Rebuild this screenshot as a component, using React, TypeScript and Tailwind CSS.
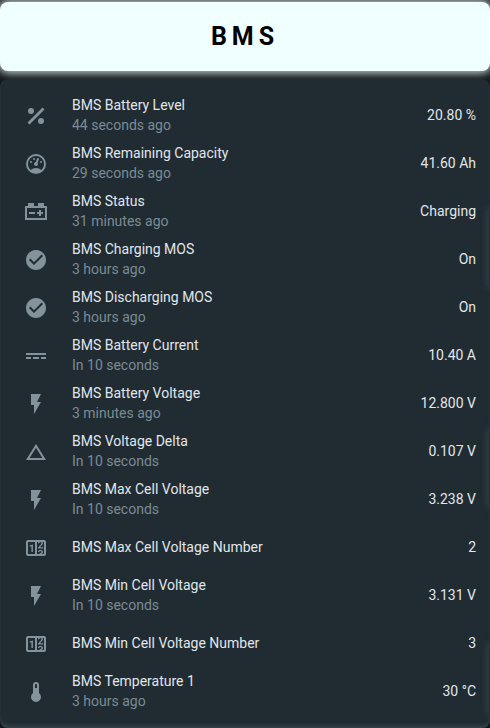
type Icon = keyof typeof icons;

const icons = {
  percent:
    'M18.5 3.5L3.5 18.5L5.5 20.5L20.5 5.5M7 4A3 3 0 0 0 4 7A3 3 0 0 0 7 10A3 3 0 0 0 10 7A3 3 0 0 0 7 4M17 14A3 3 0 0 0 14 17A3 3 0 0 0 17 20A3 3 0 0 0 20 17A3 3 0 0 0 17 14Z',
  gauge:
    'M12 2A10 10 0 0 0 2 12A10 10 0 0 0 12 22A10 10 0 0 0 22 12A10 10 0 0 0 12 2M12 4A8 8 0 0 1 20 12C20 14.4 19 16.5 17.3 18C15.9 16.7 14 16 12 16C10 16 8.2 16.7 6.7 18C5 16.5 4 14.4 4 12A8 8 0 0 1 12 4M14 5.89C13.62 5.9 13.26 6.15 13.1 6.54L11.81 9.77L11.71 10C11 10.13 10.41 10.6 10.14 11.26C9.73 12.29 10.23 13.45 11.26 13.86C12.29 14.27 13.45 13.77 13.86 12.74C14.12 12.08 14 11.32 13.57 10.76L13.67 10.5L14.96 7.29L14.97 7.26C15.17 6.75 14.92 6.17 14.41 5.96C14.28 5.91 14.15 5.89 14 5.89M10 6A1 1 0 0 0 9 7A1 1 0 0 0 10 8A1 1 0 0 0 11 7A1 1 0 0 0 10 6M7 9A1 1 0 0 0 6 10A1 1 0 0 0 7 11A1 1 0 0 0 8 10A1 1 0 0 0 7 9M17 9A1 1 0 0 0 16 10A1 1 0 0 0 17 11A1 1 0 0 0 18 10A1 1 0 0 0 17 9Z',
  battery:
    'M4 3V6H1V20H23V6H20V3H14V6H10V3H4M3 8H21V18H3V8M15 10V12H13V14H15V16H17V14H19V12H17V10H15M5 12V14H11V12H5Z',
  check:
    'M12 2C6.5 2 2 6.5 2 12S6.5 22 12 22 22 17.5 22 12 17.5 2 12 2M10 17L5 12L6.41 10.59L10 14.17L17.59 6.58L19 8L10 17Z',
  current: 'M2 9V11H22V9H2M2 13V15H7V13H2M9 13V15H15V13H9M17 13V15H22V13H17Z',
  flash: 'M7 2V13H10V22L17 10H13L17 2H7Z',
  delta: 'M12 7.77L18.39 18H5.61L12 7.77M12 4L2 20H22',
  counter:
    'M4 4H20A2 2 0 0 1 22 6V18A2 2 0 0 1 20 20H4A2 2 0 0 1 2 18V6A2 2 0 0 1 4 4M4 6V18H11V6H4M20 18V6H18.76C19 6.54 18.95 7.07 18.95 7.13C18.88 7.8 18.41 8.5 18.24 8.75L15.91 11.3L19.23 11.28L19.24 12.5L14.04 12.47L14 11.47C14 11.47 17.05 8.24 17.2 7.95C17.34 7.67 17.91 6 16.5 6C15.27 6.05 15.41 7.3 15.41 7.3L13.87 7.31C13.87 7.31 13.88 6.65 14.25 6H13V18H15.58L15.57 17.14L16.54 17.13C16.54 17.13 17.45 16.97 17.46 16.08C17.5 15.08 16.65 15.08 16.5 15.08C16.37 15.08 15.43 15.13 15.43 15.95H13.91C13.91 15.95 13.95 13.89 16.5 13.89C19.1 13.89 18.96 15.91 18.96 15.91C18.96 15.91 19 17.16 17.85 17.63L18.37 18H20M8.92 16H7.42V10.2L5.62 10.76V9.53L8.76 8.41H8.92V16Z',
  thermometer:
    'M15 13V5A3 3 0 0 0 9 5V13A5 5 0 1 0 15 13M12 4A1 1 0 0 1 13 5V8H11V5A1 1 0 0 1 12 4Z',
};

const rows: { icon: Icon; name: string; ago?: string; value: string }[] = [
  { icon: 'percent', name: 'BMS Battery Level', ago: '44 seconds ago', value: '20.80 %' },
  { icon: 'gauge', name: 'BMS Remaining Capacity', ago: '29 seconds ago', value: '41.60 Ah' },
  { icon: 'battery', name: 'BMS Status', ago: '31 minutes ago', value: 'Charging' },
  { icon: 'check', name: 'BMS Charging MOS', ago: '3 hours ago', value: 'On' },
  { icon: 'check', name: 'BMS Discharging MOS', ago: '3 hours ago', value: 'On' },
  { icon: 'current', name: 'BMS Battery Current', ago: 'In 10 seconds', value: '10.40 A' },
  { icon: 'flash', name: 'BMS Battery Voltage', ago: '3 minutes ago', value: '12.800 V' },
  { icon: 'delta', name: 'BMS Voltage Delta', ago: 'In 10 seconds', value: '0.107 V' },
  { icon: 'flash', name: 'BMS Max Cell Voltage', ago: 'In 10 seconds', value: '3.238 V' },
  { icon: 'counter', name: 'BMS Max Cell Voltage Number', value: '2' },
  { icon: 'flash', name: 'BMS Min Cell Voltage', ago: 'In 10 seconds', value: '3.131 V' },
  { icon: 'counter', name: 'BMS Min Cell Voltage Number', value: '3' },
  { icon: 'thermometer', name: 'BMS Temperature 1', ago: '3 hours ago', value: '30 °C' },
];

export default function App() {
  return (
    <main className="flex flex-col gap-2 bg-[#11181d] pt-[2px] font-[Roboto,sans-serif] text-sm leading-5">
      <header className="flex h-[69px] items-center justify-center rounded-lg bg-[#f0ffff] shadow-[0_0_10px_2px_#d3dddd]">
        <h1 className="text-[25px] font-bold tracking-[5px] text-black">BMS</h1>
      </header>
      <section className="relative overflow-hidden rounded-lg bg-[#202b32] pt-[17px] pr-[14px] pb-4 pl-4 shadow-[inset_0_-4px_4px_-2px_#3a474e]">
        <ul className="flex flex-col gap-2">
          {rows.map((row) => (
            <li key={row.name} className="flex h-10 items-center">
              <span className="flex size-10 shrink-0 items-center justify-center text-[#84939b]">
                <svg viewBox="0 0 24 24" className="size-6 fill-current" aria-hidden="true">
                  <path d={icons[row.icon]} />
                </svg>
              </span>
              <div className="min-w-0 flex-1 pb-[2px] pl-4">
                <p className="truncate text-[#e1e6ea]">{row.name}</p>
                {row.ago && <p className="truncate text-[#7b8b94]">{row.ago}</p>}
              </div>
              <span className="pb-[2px] pl-2 text-[#e1e6ea]">{row.value}</span>
            </li>
          ))}
        </ul>
        <div className="pointer-events-none absolute inset-y-0 right-0 w-px" aria-hidden="true">
          <span className="absolute top-[20%] h-[12%] w-px shadow-[0_0_6px_1px_#46535a]" />
          <span className="absolute top-[54%] h-[12%] w-px shadow-[0_0_6px_1px_#46535a]" />
          <span className="absolute top-[87%] h-[11%] w-px shadow-[0_0_6px_1px_#46535a]" />
        </div>
      </section>
    </main>
  );
}
